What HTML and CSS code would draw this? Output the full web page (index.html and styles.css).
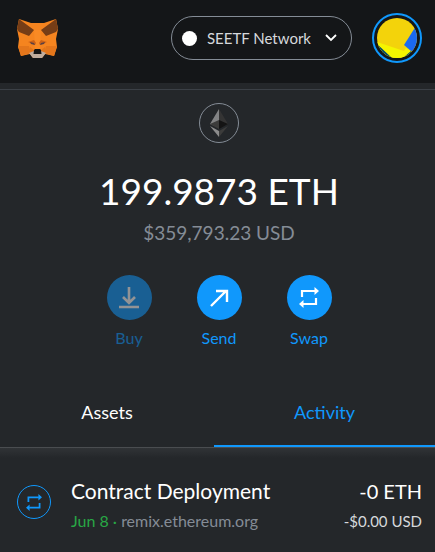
FILE: index.html
```html
<!DOCTYPE html>
<html lang="en">
<head>
<meta charset="utf-8">
<title>Wallet</title>
<link rel="stylesheet" href="styles.css">
</head>
<body>
<svg class="sprite" aria-hidden="true">
  <symbol id="swap" viewBox="0 0 20 21">
    <path d="M3 10V4h13M17 11v6H4" fill="none" stroke="currentColor" stroke-width="2.200"/>
    <path d="M15.500 0v8L20 4zM4.500 13v8L0 17z" fill="currentColor"/>
  </symbol>
</svg>
<header class="header">
  <a class="logo" href="#" aria-label="Home">
    <svg viewBox="0 0 41 39">
      <path d="M2 0 14 4h13L39 0l2 10-2 10 1 8-3 9-9-2-3 4h-9l-3-4-9 2-3-9 1-8L0 10z" fill="#f5841f"/>
      <path d="M2 0 17 11l-5 6-10-4-2-3zM39 0 24 11l5 6 10-4 2-3z" fill="#763d16"/>
      <path d="M17 11h7l-1 19h-5z" fill="#f98a24"/>
      <path d="M1 27h11l2 7-10 3zM40 27H29l-2 7 10 3z" fill="#e4761b"/>
      <path d="m11 23 6-2 2 3-1 2zM30 23l-6-2-2 3 1 2z" fill="#cd6116"/>
      <path d="m13 23 4 1 1 2-4-1zM28 23l-4 1-1 2 4-1z" fill="#5b4144"/>
      <path d="m13 28 5 4-5 3zM28 28l-5 4 5 3z" fill="#e2761b"/>
      <path d="m12 34 5-2h7l5 2-4 5h-9z" fill="#c0ad9e"/>
      <path d="m17 31 1-1h5l1 1 .5 4h-8z" fill="#161616"/>
    </svg>
  </a>
  <button class="network" type="button">
    <span class="dot"></span>
    <span>SEETF Network</span>
    <svg class="chevron" viewBox="0 0 12 8"><path d="m1 1 5 5 5-5" fill="none" stroke="currentColor" stroke-width="1.800"/></svg>
  </button>
  <button class="account" type="button" aria-label="Account">
    <svg viewBox="0 0 40 40">
      <defs><clipPath id="disc"><circle cx="20" cy="20" r="20"/></clipPath></defs>
      <g clip-path="url(#disc)">
        <path d="M0 0h40v40H0z" fill="#f3d30b"/>
        <path d="m0 24 27 9 2-3 5 3-4 7H0z" fill="#f5f500"/>
        <path d="m0 26 15 14H0zM26 40l8-7 3 7z" fill="#034a68"/>
        <path d="m39 8-12 19 7 6h6V8z" fill="#1b69f2"/>
      </g>
    </svg>
  </button>
</header>
<main class="main">
  <section class="overview">
    <div class="token">
      <svg viewBox="0 0 18 28">
        <path d="M9 0v19l-9-4z" fill="#828384"/><path d="M9 0v19l9-4z" fill="#343434"/>
        <path d="m9 11-9 4 9 5z" fill="#3c3c3b"/><path d="m9 11 9 4-9 5z" fill="#141414"/>
        <path d="m0 17 9 5v6z" fill="#8c8c8c"/><path d="m18 17-9 5v6z" fill="#3c3c3b"/>
      </svg>
    </div>
    <h1 class="balance">199.9873 ETH</h1>
    <p class="fiat">$359,793.23 USD</p>
    <div class="actions">
      <button class="action" type="button" disabled>
        <span class="disc"><svg viewBox="0 0 22 24"><path d="M11 1v15M5 11l6 6 6-6M1 21h20" fill="none" stroke="currentColor" stroke-width="2.600"/></svg></span>
        <span>Buy</span>
      </button>
      <button class="action" type="button">
        <span class="disc"><svg viewBox="0 0 22 24"><path d="M3 20 18 5M8 5h11v11" fill="none" stroke="currentColor" stroke-width="2.400"/></svg></span>
        <span>Send</span>
      </button>
      <button class="action" type="button">
        <span class="disc"><svg class="swap"><use href="#swap"/></svg></span>
        <span>Swap</span>
      </button>
    </div>
  </section>
  <nav class="tabs">
    <button class="tab" type="button">Assets</button>
    <button class="tab active" type="button">Activity</button>
  </nav>
  <section class="item">
    <span class="item-icon"><svg><use href="#swap"/></svg></span>
    <div class="detail">
      <h2 class="title">Contract Deployment</h2>
      <p class="sub"><span class="date">Jun 8 · </span>remix.ethereum.org</p>
    </div>
    <div class="amount">
      <p class="title">-0 ETH</p>
      <p class="sub">-$0.00 USD</p>
    </div>
  </section>
</main>
</body>
</html>
```
FILE: styles.css
```css
* { box-sizing: border-box; }
body {
  margin: 0;
  min-height: 100vh;
  background: #24272a;
  color: #fff;
  font: 16px/24px Lato, "Open Sans", sans-serif;
}
h1, h2, p { margin: 0; font-weight: 400; }
button {
  padding: 0;
  border: 0;
  background: none;
  color: inherit;
  font: inherit;
  cursor: pointer;
}
svg { display: block; }
.sprite { position: absolute; width: 0; height: 0; }

.header {
  display: flex;
  align-items: center;
  height: 83px;
  padding: 0 13px 7px 17px;
  background: #141618;
}
.logo { margin-right: auto; }
.logo svg { width: 41px; height: 39px; }
.network {
  display: flex;
  align-items: center;
  gap: 10px;
  height: 44px;
  padding: 0 14px 0 10px;
  border: 1px solid #848c96;
  border-radius: 22px;
  color: #d6d9dc;
  font-size: 15px;
}
.dot { width: 15px; height: 15px; border-radius: 50%; background: #fff; }
.chevron { width: 12px; height: 8px; margin-left: 4px; color: #fff; }
.account {
  width: 50px;
  height: 50px;
  margin-left: 20px;
  padding: 3px;
  border: 2px solid #1098fc;
  border-radius: 50%;
}
.account svg { width: 40px; height: 40px; }

.main { margin-top: 6px; border-top: 1px solid #3b4046; }
.overview {
  display: flex;
  flex-direction: column;
  align-items: center;
  padding: 13px 0 29px 3px;
}
.token {
  display: grid;
  place-items: center;
  width: 40px;
  height: 40px;
  border: 1px solid #848c96;
  border-radius: 50%;
}
.token svg { width: 18px; height: 28px; }
.balance { margin-top: 20px; font-size: 37px; line-height: 56px; }
.fiat { margin-top: 2px; color: #848c96; font-size: 19px; }
.actions { display: flex; margin-top: 30px; }
.action { width: 90px; color: #1098fc; }
.action:disabled { opacity: .5; cursor: default; }
.disc {
  display: grid;
  place-items: center;
  width: 45px;
  height: 45px;
  margin: 0 auto 6px;
  border-radius: 50%;
  background: #1098fc;
  color: #fff;
}
.disc svg { width: 22px; height: 24px; }
.disc .swap { width: 20px; height: 21px; }

.tabs { display: flex; border-bottom: 1px solid #4a4d50; }
.tab {
  flex: 31;
  height: 68px;
  border-bottom: 2px solid transparent;
  font-size: 18px;
}
.tab.active { flex: 32; border-color: #1098fc; color: #1098fc; }

.item {
  display: flex;
  align-items: flex-start;
  gap: 20px;
  padding: 29px 13px 16px 17px;
  background: linear-gradient(#303336, #24272a 10px);
}
.item-icon {
  display: grid;
  place-items: center;
  width: 34px;
  height: 34px;
  margin-top: 8px;
  border: 1px solid #1098fc;
  border-radius: 50%;
  color: #1098fc;
}
.item-icon svg { width: 16px; height: 17px; }
.detail { flex: 1; }
.title { font-size: 20px; line-height: 28px; }
.detail .title { font-size: 21px; }
.sub { margin-top: 4px; font-size: 15px; line-height: 24px; }
.detail .sub { color: #848c96; font-size: 16px; }
.detail .date { color: #28a745; }
.amount { color: #fff; text-align: right; }
.amount .sub { color: #d6d9dc; }
```
